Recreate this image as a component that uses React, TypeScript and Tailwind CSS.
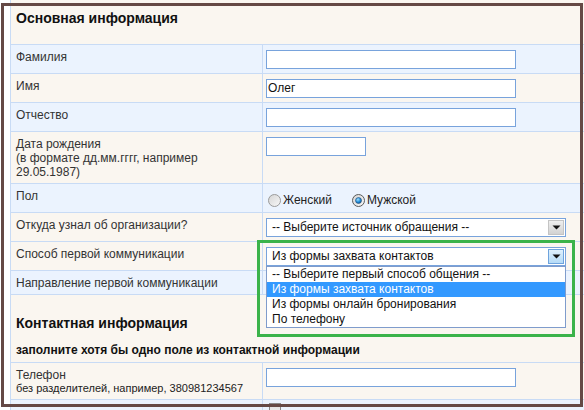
import React from "react";

const Arrow = () => (
  <svg width="9" height="5" viewBox="0 0 9 5">
    <path d="M0.5 0.5 H8.5 L4.5 4.5 Z" fill="#111" />
  </svg>
);

const Radio = ({ checked }: { checked?: boolean }) => (
  <svg width="13" height="13" viewBox="0 0 13 13" className="shrink-0">
    <defs>
      <linearGradient id={checked ? "rc" : "ru"} x1="0" y1="0" x2="1" y2="1">
        <stop offset="0" stopColor="#d4d4d4" />
        <stop offset="1" stopColor="#f8f8f8" />
      </linearGradient>
      <radialGradient id="dot" cx="0.4" cy="0.35" r="0.7">
        <stop offset="0" stopColor="#9fe0ff" />
        <stop offset="0.6" stopColor="#1c8ad8" />
        <stop offset="1" stopColor="#0b4f8c" />
      </radialGradient>
    </defs>
    <circle cx="6.5" cy="6.5" r="6" fill={`url(#${checked ? "rc" : "ru"})`} stroke={checked ? "#5a5a5a" : "#9a9a9a"} strokeWidth="1" />
    {checked && <circle cx="6.5" cy="6.5" r="3" fill="url(#dot)" stroke="#2a4f78" strokeWidth="0.6" />}
  </svg>
);

const Input = ({ value = "", w = "w-[250px]" }: { value?: string; w?: string }) => (
  <div className={`${w} h-[19px] border border-[#78a3dc] bg-white pl-[1px] leading-[17px] text-[12px] text-[#111]`}>{value}</div>
);

const Select = ({ text, active }: { text: string; active?: boolean }) => (
  <div className="w-[300px] h-[19px] border border-[#78a3dc] bg-white flex items-stretch">
    <div className="flex-1 pl-[5px] leading-[17px] text-[12px] text-[#111] whitespace-nowrap overflow-hidden">{text}</div>
    <div className="p-[1px] flex">
      <div
        className={
          active
            ? "w-[16px] flex items-center justify-center border border-[#6ea3dd] bg-gradient-to-b from-[#dff0fc] to-[#b5dbf7]"
            : "w-[16px] flex items-center justify-center border border-[#c4c4c4] bg-gradient-to-b from-[#efefef] to-[#d2d2d2]"
        }
      >
        <Arrow />
      </div>
    </div>
  </div>
);

const Row = ({
  bg,
  label,
  children,
  rightClass = "pt-[5px] pb-[4px]",
}: {
  bg: string;
  label: React.ReactNode;
  children?: React.ReactNode;
  rightClass?: string;
}) => (
  <div className={`grid grid-cols-[252px_1fr] border-b border-[#c8dbf5] ${bg}`}>
    <div className="border-r border-[#c8dbf5] pl-[5px] pt-[5px] pb-[4px]">{label}</div>
    <div className={`pl-[3px] ${rightClass}`}>{children}</div>
  </div>
);

export default function App() {
  const blue = "bg-[#ebf3fe]";
  const beige = "bg-[#faf6f0]";
  return (
    <div className="relative w-[584px] h-[410px] overflow-hidden bg-white font-['Liberation_Sans',Arial,sans-serif] text-[12px] leading-[14px] text-[#333]">
      <div className="ml-[10px] w-[600px] border-l border-[#c8dbf5]">
        <div className={`h-[45px] border-b border-[#c8dbf5] ${beige} pl-[5px] pt-[9px]`}>
          <div className="text-[14px] leading-[18px] font-bold text-[#111]">Основная информация</div>
        </div>
        <Row bg={blue} label="Фамилия">
          <Input />
        </Row>
        <Row bg={beige} label="Имя">
          <Input value="Олег" />
        </Row>
        <Row bg={blue} label="Отчество">
          <Input />
        </Row>
        <Row
          bg={beige}
          label={
            <div>
              Дата рождения
              <br />
              (в формате дд.мм.гггг, например
              <br />
              29.05.1987)
            </div>
          }
        >
          <Input w="w-[100px]" />
        </Row>
        <Row bg={blue} label="Пол" rightClass="pt-[9px] pb-[5px]">
          <div className="flex items-center h-[14px] pl-[2px]">
            <Radio />
            <span className="ml-[2px] text-[#222]">Женский</span>
            <span className="ml-[20px]" />
            <Radio checked />
            <span className="ml-[2px] text-[#222]">Мужской</span>
          </div>
        </Row>
        <Row bg={beige} label="Откуда узнал об организации?">
          <Select text="-- Выберите источник обращения --" />
        </Row>
        <Row bg={beige} label="Способ первой коммуникации">
          <Select text="Из формы захвата контактов" active />
        </Row>
        <Row bg={blue} label="Направление первой коммуникации" />
        <div className={`border-b border-[#c8dbf5] ${beige} pl-[5px] pt-[19px] pb-[5px]`}>
          <div className="text-[14px] leading-[18px] font-bold text-[#111]">Контактная информация</div>
          <div className="mt-[11px] text-[12px] leading-[14px] font-bold text-[#111]">
            заполните хотя бы одно поле из контактной информации
          </div>
        </div>
        <Row
          bg={beige}
          label={
            <div>
              <div>Телефон</div>
              <div className="text-[11px] leading-[13px] text-[#222]">без разделителей, например, 380981234567</div>
            </div>
          }
        >
          <Input />
        </Row>
        <Row bg={blue} label="" rightClass="pt-[3px] pb-[4px]">
          <div className="ml-[3px] w-[12px] h-[12px] border border-[#8a8a8a] bg-gradient-to-b from-[#dcdcdc] to-[#f4f4f4]" />
        </Row>
      </div>

      {/* open dropdown list */}
      <div className="absolute left-[266px] top-[266px] w-[300px] border border-[#7f9ccc] bg-white text-[12px] text-[#111]">
        <div className="h-[15px] leading-[15px] pl-[5px] whitespace-nowrap">-- Выберите первый способ общения --</div>
        <div className="h-[15px] leading-[15px] pl-[5px] whitespace-nowrap bg-[#3399ff] text-white">Из формы захвата контактов</div>
        <div className="h-[15px] leading-[15px] pl-[5px] whitespace-nowrap">Из формы онлайн бронирования</div>
        <div className="h-[15px] leading-[15px] pl-[5px] whitespace-nowrap">По телефону</div>
      </div>

      {/* green highlight */}
      <div className="absolute left-[257px] top-[240px] w-[318px] h-[97px] border-[3px] border-[#3bb34a]" />

      {/* brown frame */}
      <div className="absolute left-[1px] top-[3px] w-[582px] h-[404px] border-[3px] border-[#654945]" />
    </div>
  );
}
